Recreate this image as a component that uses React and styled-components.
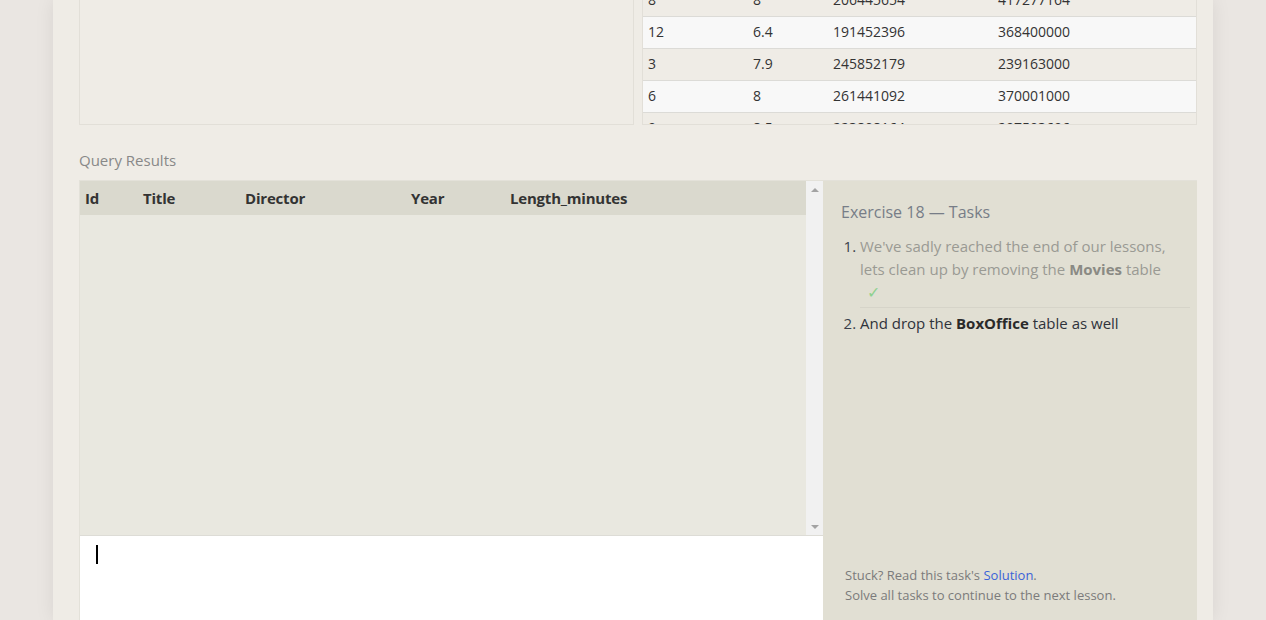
import React, { useLayoutEffect, useRef } from "react";
import styled, { createGlobalStyle } from "styled-components";

const GlobalStyle = createGlobalStyle`
  html, body { margin: 0; padding: 0; }
  body {
    background: #eae6e2;
    font-family: "Open Sans", "Liberation Sans", sans-serif;
    color: #333;
    overflow: hidden;
  }
`;

const Page = styled.div`
  width: 1160px;
  margin: 0 auto;
  height: 620px;
  overflow: hidden;
  background: #efece6;
  box-shadow: 0 0 18px rgba(0, 0, 0, 0.08);
  padding: 0 16px 0 26px;
  box-sizing: border-box;
`;

const TopRow = styled.div`
  display: grid;
  grid-template-columns: 555px 555px;
  gap: 8px;
  height: 125px;
`;

const Panel = styled.div`
  border: 1px solid #e2dfd8;
  border-top: none;
  background: #efece6;
  overflow: hidden;
  box-sizing: border-box;
`;

const DataTable = styled.table`
  width: 100%;
  border-collapse: collapse;
  font-size: 14px;
  color: #333;
  tr:nth-child(even) { background: #f8f8f8; }
  td {
    height: 32px;
    padding: 0 5px 2px;
    border-bottom: 1px solid #dcdbd7;
    box-sizing: border-box;
  }
`;

const QueryLabel = styled.div`
  margin-top: 25px;
  font-size: 15px;
  line-height: 20px;
  color: #888;
  font-weight: 400;
`;

const Results = styled.div`
  margin-top: 10px;
  display: grid;
  grid-template-columns: 1fr 374px;
  height: 460px;
  border-top: 1px solid #e3e1d9;
  border-left: 1px solid #e3e1d9;
  box-sizing: border-box;
`;

const LeftCol = styled.div`
  display: flex;
  flex-direction: column;
  min-width: 0;
`;

const ResultPane = styled.div`
  display: flex;
  height: 355px;
  border-bottom: 1px solid #dddcd6;
  box-sizing: border-box;
`;

const ResultTable = styled.div`
  flex: 1;
  background: #e9e8e0;
`;

const HeaderRow = styled.div`
  display: grid;
  grid-template-columns: 58px 102px 166px 99px 1fr;
  height: 34px;
  align-items: center;
  background: #dad9ce;
  padding-left: 5px;
  font-size: 15px;
  font-weight: 700;
  letter-spacing: -0.2px;
  color: #333;
`;

const Scrollbar = styled.div`
  width: 17px;
  background: #f1f1f1;
  display: flex;
  flex-direction: column;
  justify-content: space-between;
  align-items: center;
  padding: 7px 0 6px;
  box-sizing: border-box;
`;

const Arrow = styled.div`
  width: 0;
  height: 0;
  border-left: 4px solid transparent;
  border-right: 4px solid transparent;
  ${(p) =>
    p.$down
      ? "border-top: 4px solid #a3a3a3;"
      : "border-bottom: 4px solid #a3a3a3;"}
`;

const Editor = styled.div`
  flex: 1;
  background: #fff;
  padding: 9px 0 0 16px;
`;

const Caret = styled.span`
  display: block;
  width: 2px;
  height: 19px;
  background: #000;
`;

const Tasks = styled.div`
  background: #e1dfd3;
  display: flex;
  flex-direction: column;
  padding: 20px 7px 0 18px;
  box-sizing: border-box;
`;

const TasksTitle = styled.div`
  font-size: 16px;
  line-height: 22px;
  color: #777d87;
  margin-bottom: 12px;
`;

const TaskList = styled.ol`
  margin: 0;
  padding: 0 0 0 19px;
  font-size: 15px;
  line-height: 23px;
`;

const TaskItem = styled.li`
  color: ${(p) => (p.$done ? "#9a9a93" : "#2f333b")};
  padding: ${(p) => (p.$done ? "0 0 3px" : "4px 0 0")};
  border-bottom: ${(p) => (p.$done ? "1px solid #d6d4c9" : "none")};
  &::marker { color: #3a3f4b; }
  b { font-weight: 700; color: ${(p) => (p.$done ? "#8a8a84" : "#2a2a2a")}; }
`;

const Check = styled.div`
  padding-left: 7px;
  color: #8fd18f;
  font-size: 16px;
`;

const Footer = styled.div`
  margin-top: auto;
  padding: 0 0 35px 4px;
  font-size: 13px;
  line-height: 20px;
  color: #7b7b7b;
  a { color: #3b63d8; text-decoration: none; }
`;

const boxOffice = [
  ["5", "8.2", "380843261", "555900000"],
  ["14", "7.4", "268492764", "475066843"],
  ["8", "8", "206445654", "417277164"],
  ["12", "6.4", "191452396", "368400000"],
  ["3", "7.9", "245852179", "239163000"],
  ["6", "8", "261441092", "370001000"],
  ["9", "8.5", "223808164", "297503696"],
  ["11", "7.2", "162798565", "200600000"],
  ["1", "8.3", "191796233", "170162503"],
  ["7", "7.2", "244082982", "217900167"],
];

const colWidths = [105, 80, 165, null];

export default function App() {
  const scrollRef = useRef(null);
  useLayoutEffect(() => {
    if (scrollRef.current) scrollRef.current.scrollTop = 80;
  }, []);

  return (
    <>
      <GlobalStyle />
      <Page>
        <TopRow>
          <Panel />
          <Panel ref={scrollRef}>
            <DataTable>
              <colgroup>
                {colWidths.map((w, i) => (
                  <col key={i} style={w ? { width: w } : undefined} />
                ))}
              </colgroup>
              <tbody>
                {boxOffice.map((r, i) => (
                  <tr key={i}>
                    {r.map((c, j) => (
                      <td key={j}>{c}</td>
                    ))}
                  </tr>
                ))}
              </tbody>
            </DataTable>
          </Panel>
        </TopRow>

        <QueryLabel>Query Results</QueryLabel>

        <Results>
          <LeftCol>
            <ResultPane>
              <ResultTable>
                <HeaderRow>
                  <span>Id</span>
                  <span>Title</span>
                  <span>Director</span>
                  <span>Year</span>
                  <span>Length_minutes</span>
                </HeaderRow>
              </ResultTable>
              <Scrollbar>
                <Arrow />
                <Arrow $down />
              </Scrollbar>
            </ResultPane>
            <Editor>
              <Caret />
            </Editor>
          </LeftCol>

          <Tasks>
            <TasksTitle>Exercise 18 — Tasks</TasksTitle>
            <TaskList>
              <TaskItem $done>
                We've sadly reached the end of our lessons, lets clean up by
                removing the <b>Movies</b> table
                <Check>✓</Check>
              </TaskItem>
              <TaskItem>
                And drop the <b>BoxOffice</b> table as well
              </TaskItem>
            </TaskList>
            <Footer>
              Stuck? Read this task's <a href="#">Solution</a>.
              <br />
              Solve all tasks to continue to the next lesson.
            </Footer>
          </Tasks>
        </Results>
      </Page>
    </>
  );
}
